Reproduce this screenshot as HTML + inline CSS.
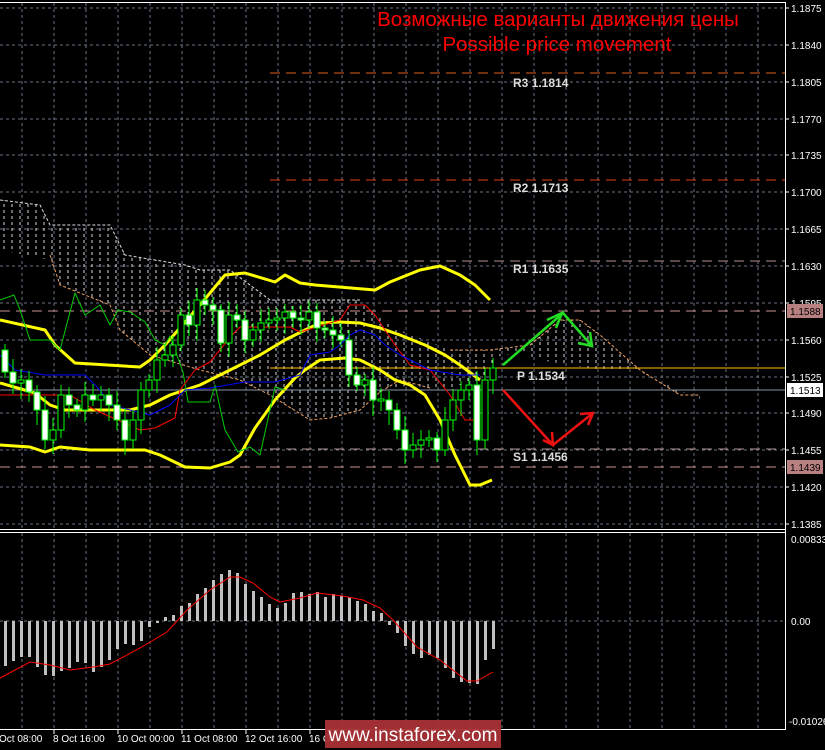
<!DOCTYPE html>
<html><head><meta charset="utf-8"><style>
html,body{margin:0;padding:0;background:#000;width:825px;height:750px;overflow:hidden}
svg{display:block}
text{font-family:"Liberation Sans",sans-serif}
</style></head><body>
<svg id="s" width="825" height="750" viewBox="0 0 825 750" xmlns="http://www.w3.org/2000/svg">
<defs>
<pattern id="dots" width="8" height="6" patternUnits="userSpaceOnUse">
<line x1="4" y1="0" x2="4" y2="3" stroke="#d8d8d8" stroke-width="1"/>
</pattern>
<clipPath id="main"><rect x="0" y="3" width="785" height="525"/></clipPath>
</defs>
<rect width="825" height="750" fill="#000"/>
<g id="grid"></g>
<g clip-path="url(#main)">
<polygon points="0,200 40,205 50,225 110,225 125,255 185,265 200,270 230,270 270,300 300,300 360,300 400,330 450,350 490,350 530,345 560,320 580,320 600,335 640,370 680,395 700,395 700,400 640,372 600,370 540,360 520,352 500,356 480,380 440,390 410,385 380,392 360,410 330,418 310,420 270,395 240,380 200,370 150,355 120,330 110,305 60,285 50,260 0,250" fill="url(#dots)"/>
<polyline points="50,255 60,285 110,305 120,330 150,355 200,370 240,380 270,395 310,420 330,418 360,410 380,392 400,380 430,388" fill="none" stroke="#f0a060" stroke-width="1" stroke-dasharray="3,2"/>
<polyline points="450,350 490,350 530,345 560,320 580,320 600,335 640,370 680,395 700,395" fill="none" stroke="#f0a060" stroke-width="1" stroke-dasharray="3,2"/>
<polyline points="0,200 40,205 50,225 110,225 125,255 185,265 200,270 230,270 270,300 300,300 360,300" fill="none" stroke="#ddd" stroke-width="1" stroke-dasharray="3,2"/>
</g>
<g id="levels"></g>
<g id="ind" fill="none" stroke-linejoin="round">
<polyline stroke="#ffff00" stroke-width="3" points="0,320 45,330 55,345 75,363 140,367 150,360 165,345 200,305 225,275 245,273 275,282 285,275 300,283 315,285 375,290 390,282 420,270 440,266 460,275 475,285 490,300"/>
<polyline stroke="#ffff00" stroke-width="3" points="0,383 35,393 50,405 65,410 90,410 130,410 150,405 170,395 200,385 230,370 260,355 285,340 305,330 320,323 340,322 360,323 380,328 400,335 425,345 445,355 460,365 480,380"/>
<polyline stroke="#ffff00" stroke-width="3" points="0,445 30,447 45,452 60,447 90,450 145,450 160,455 185,467 210,468 230,462 240,455 255,428 275,400 295,378 305,370 320,360 345,358 360,360 380,370 395,380 410,385 425,395 440,420 455,455 470,485 480,485 492,480"/>
<polyline stroke="#00cc00" stroke-width="1" points="0,300 14,295 20,310 30,340 50,340 60,350 75,293 85,315 100,305 110,325 118,310 130,312 145,322 155,340 165,345 170,336 183,372 188,402 210,402 215,385 225,430 238,452 250,447 260,455 275,387 285,390"/>
<polyline stroke="#ff0000" stroke-width="1" points="0,395 70,395 95,410 140,430 155,428 175,418 180,390 195,370 210,362 232,335 240,327 290,327 300,332 340,320 350,305 365,305 375,315 385,330 395,345 410,365 430,370 450,395 465,420 480,420"/>
<polyline stroke="#0000ff" stroke-width="1" points="0,355 15,370 45,375 85,375 100,390 110,405 150,415 170,405 185,390 210,388 245,382 275,382 300,375 310,355 330,352 340,345 350,335 360,330 375,335 385,345 400,355 430,370 460,375 480,375"/>
</g>
<g id="candles"></g>
<g stroke-width="2.5" fill="none">
<polyline stroke="#22dd22" points="503,365 563,313 592,346"/>
<polyline stroke="#22dd22" points="547,320 562,313 556,328"/>
<polyline stroke="#22dd22" points="578,343 592,346 590,332"/>
<polyline stroke="#ee1111" points="503,390 553,445 593,413"/>
<polyline stroke="#ee1111" points="543,440 553,445 552,432"/>
<polyline stroke="#ee1111" points="580,414 593,413 588,425"/>
</g>
<g font-family="Liberation Mono,monospace" font-weight="bold" font-size="12" fill="#ddd">
<text x="513" y="87">R3 1.1814</text>
<text x="513" y="192">R2 1.1713</text>
<text x="513" y="273">R1 1.1635</text>
<text x="517" y="380">P 1.1534</text>
<text x="513" y="461">S1 1.1456</text>
</g>
<text x="558" y="26" text-anchor="middle" font-size="20.5" fill="#ff0000">Возможные варианты движения цены</text>
<text x="557" y="51" text-anchor="middle" font-size="20.5" fill="#ff0000">Possible price movement</text>
<g id="macd"></g>
<polyline fill="none" stroke="#ff0000" stroke-width="1" points="0,678 30,662 50,665 70,670 93,667 110,664 140,648 167,632 187,610 210,590 230,577 240,577 253,583 270,597 280,602 300,598 317,593 343,596 363,600 380,608 393,620 417,647 440,660 467,681 477,681 493,672"/>
<g id="axis"></g>
<rect x="325" y="720" width="176" height="28" fill="#a83236" opacity="0.95"/>
<text x="413" y="741" text-anchor="middle" font-size="19" fill="#fff">www.instaforex.com</text>
</svg>
<script>
(function(){
var NS="http://www.w3.org/2000/svg";
function el(p,t,a,txt){var e=document.createElementNS(NS,t);for(var k in a)e.setAttribute(k,a[k]);if(txt!=null)e.textContent=txt;document.getElementById(p).appendChild(e);return e;}
for(var x=22;x<785;x+=32){el('grid','line',{x1:x,y1:3,x2:x,y2:528,stroke:'#6a7584','stroke-dasharray':'3,3'});el('grid','line',{x1:x,y1:533,x2:x,y2:729,stroke:'#6a7584','stroke-dasharray':'3,3'});}
var prices=["1.1875","1.1840","1.1805","1.1770","1.1735","1.1700","1.1665","1.1630","1.1595","1.1560","1.1525","1.1490","1.1455","1.1420","1.1385"];
for(var i=0;i<15;i++){var y=Math.round(8+i*36.86);el('grid','line',{x1:0,y1:y,x2:785,y2:y,stroke:'#6a7584','stroke-dasharray':'3,3'});el('axis','line',{x1:785,y1:y,x2:789,y2:y,stroke:'#fff'});el('axis','text',{x:791,y:y+4,'font-size':'10',fill:'#fff'},prices[i]);}
el('grid','line',{x1:0,y1:621,x2:785,y2:621,stroke:'#6a7584','stroke-dasharray':'3,3'});
function lv(y,c,d){el('levels','line',{x1:270,y1:y,x2:785,y2:y,stroke:c,'stroke-dasharray':d||'10,6'});}
lv(73,'#e0601e');lv(180,'#e0401e');lv(261,'#b09090');lv(311,'#c89090');lv(449,'#b09090');lv(467,'#c89090');
el('levels','line',{x1:0,y1:311,x2:270,y2:311,stroke:'#c89090','stroke-dasharray':'10,6'});
el('levels','line',{x1:0,y1:467,x2:270,y2:467,stroke:'#c89090','stroke-dasharray':'10,6'});
el('levels','line',{x1:270,y1:368,x2:785,y2:368,stroke:'#ffc000'});
el('levels','line',{x1:0,y1:390,x2:785,y2:390,stroke:'#8896a4'});
var c=[372,383,380,392,410,440,430,395,405,410,395,400,395,405,420,440,420,390,380,360,355,345,315,325,300,305,310,343,315,320,340,330,323,320,318,312,318,320,312,328,330,335,340,375,385,380,400,400,410,430,450,445,440,438,450,420,400,390,385,440,380,368];
var o=350;
for(var i=0;i<c.length;i++){var x=5+8*i,cl=c[i],tp=Math.min(o,cl),bt=Math.max(o,cl);if(bt-tp<2){tp-=1;bt+=1;}
var hh=tp-6-(i*7%9),ll=bt+6+(i*5%11);
el('candles','line',{x1:x,y1:hh,x2:x,y2:ll,stroke:'#00ff00'});
el('candles','rect',{x:x-3,y:tp,width:6,height:bt-tp,fill:(cl>o?'#fff':'#000'),stroke:'#00ff00'});
o=cl;}
var m=[666,661,657,657,667,675,676,671,668,662,663,672,667,660,649,644,645,641,627,623,617,615,606,603,594,588,580,574,570,573,584,591,597,604,608,603,593,592,594,592,597,594,596,597,601,604,611,613,625,633,646,654,658,655,658,668,678,682,683,684,660,649];
for(var i=0;i<m.length;i++){var x=4+8*i,y=m[i];el('macd','rect',{x:x,y:Math.min(y,621),width:3,height:Math.abs(y-621),fill:'#c0c0c0'});}
el('axis','line',{x1:0,y1:2.5,x2:785,y2:2.5,stroke:'#fff'});
el('axis','line',{x1:785.5,y1:2,x2:785.5,y2:729,stroke:'#fff'});
el('axis','line',{x1:0,y1:529.5,x2:786,y2:529.5,stroke:'#fff'});
el('axis','line',{x1:0,y1:532.5,x2:786,y2:532.5,stroke:'#fff'});
el('axis','line',{x1:0,y1:729.5,x2:786,y2:729.5,stroke:'#fff'});
el('axis','text',{x:791,y:543,'font-size':'10',fill:'#fff'},'0.00833');
el('axis','text',{x:791,y:625,'font-size':'10',fill:'#fff'},'0.00');
el('axis','text',{x:789,y:725,'font-size':'10',fill:'#fff'},'-0.01026');
function hl(y,bg,fg,t){el('axis','rect',{x:787,y:y-7,width:36,height:14,fill:bg});el('axis','text',{x:790,y:y+4,'font-size':'10',fill:fg},t);}
hl(311,'#b88080','#000','1.1588');hl(390,'#fff','#000','1.1513');hl(467,'#b88080','#000','1.1439');
var tl=[[0,'Oct 08:00'],[54,'8 Oct 16:00'],[118,'10 Oct 00:00'],[182,'11 Oct 08:00'],[246,'12 Oct 16:00'],[310,'16 Oct']];
for(var i=0;i<tl.length;i++){el('axis','text',{x:tl[i][0]-1,y:742,'font-size':'10',fill:'#fff'},tl[i][1]);if(i)el('axis','line',{x1:tl[i][0],y1:730,x2:tl[i][0],y2:734,stroke:'#fff'});}
})();
</script>
</body></html>
